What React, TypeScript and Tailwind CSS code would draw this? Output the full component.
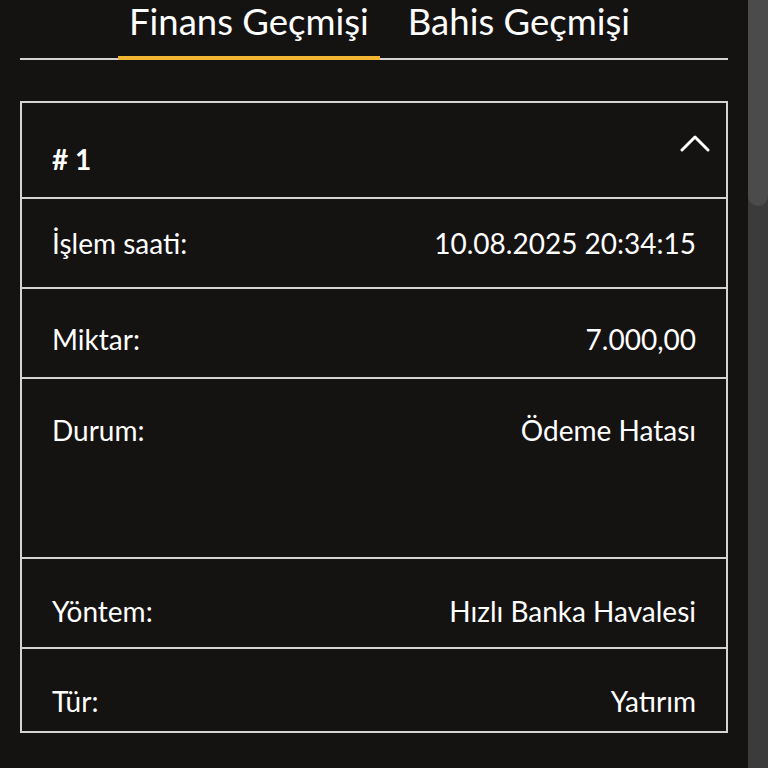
import React from 'react'

const rows = [
  { label: 'İşlem saati:', value: '10.08.2025 20:34:15', cls: 'h-[90px] pt-[30px] border-b-2' },
  { label: 'Miktar:', value: '7.000,00', cls: 'h-[90px] pt-[36px] border-b-2' },
  { label: 'Durum:', value: 'Ödeme Hatası', cls: 'h-[180px] pt-[37px] border-b-2' },
  { label: 'Yöntem:', value: 'Hızlı Banka Havalesi', cls: 'h-[90px] pt-[38px] border-b-2' },
  { label: 'Tür:', value: 'Yatırım', cls: 'h-[82px] pt-[38px]' },
]

const ChevronUp = () => (
  <svg width="30" height="18" viewBox="0 0 30 18" fill="none">
    <path d="M2 16 L15 3 L28 16" stroke="white" strokeWidth="3" strokeLinecap="round" strokeLinejoin="round" />
  </svg>
)

export default function App() {
  return (
    <div className="flex h-screen w-full overflow-hidden bg-[#151212] font-['Lato',sans-serif] text-white">
      <div className="flex w-[748px] flex-col px-5">
        <div className="flex justify-center gap-[17px] border-b-2 border-[#d4d4d4] pl-[11px]">
          <button className="-mb-[2px] border-b-4 border-[#f2b632] px-[11px] pb-[13px] pt-[0px] text-[36.5px] leading-[43px] text-white">
            Finans Geçmişi
          </button>
          <button className="-mb-[2px] border-b-4 border-transparent px-[11px] pb-[13px] pt-[0px] text-[36.5px] leading-[43px] text-white">
            Bahis Geçmişi
          </button>
        </div>

        <div className="mt-[41px] flex flex-col border-2 border-[#d4d4d4]">
          <div className="flex h-[96px] items-start justify-between border-b-2 border-[#d4d4d4] pl-[30px] pr-[16px]">
            <span className="pt-[42px] text-[28px] font-bold leading-none">#&nbsp;1</span>
            <span className="pt-[31px]">
              <ChevronUp />
            </span>
          </div>
          {rows.map((r) => (
            <div
              key={r.label}
              className={`flex items-start justify-between border-[#d4d4d4] pl-[30px] pr-[30px] ${r.cls}`}
            >
              <span className="text-[28px] leading-none">{r.label}</span>
              <span className="text-[28px] leading-none">{r.value}</span>
            </div>
          ))}
        </div>
      </div>

      <div className="flex w-5 flex-col bg-[#3b3b3b]">
        <div className="h-[206px] rounded-b-full bg-[#4b4b4b]" />
      </div>
    </div>
  )
}
